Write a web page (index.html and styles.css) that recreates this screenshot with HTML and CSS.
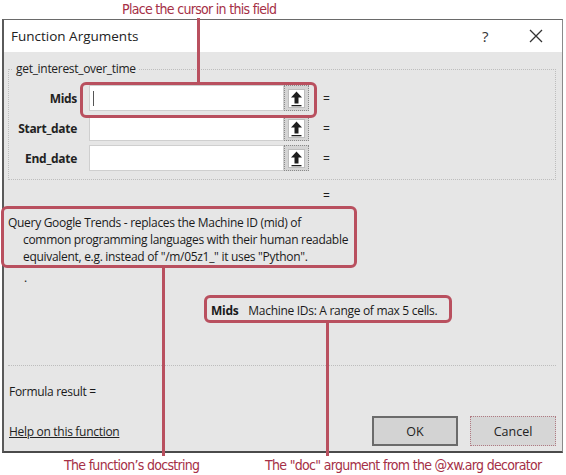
FILE: index.html
```html
<!DOCTYPE html>
<html>
<head>
<meta charset="utf-8">
<link rel="stylesheet" href="styles.css">
</head>
<body>
<div class="page">
  <div class="note note-top">Place the cursor in this field</div>

  <div class="dialog">
    <div class="titlebar">
      <span class="title">Function Arguments</span>
      <span class="tb-help">?</span>
      <span class="tb-close">
        <svg width="14" height="14" viewBox="0 0 14 14"><path d="M1 1 L13 13 M13 1 L1 13" stroke="#333" stroke-width="1.3" fill="none"/></svg>
      </span>
    </div>

    <div class="content">
      <fieldset class="group">
        <legend>get_interest_over_time</legend>
        <div class="args">
          <label class="arg-label">Mids</label>
          <div class="arg-input"><span class="caret"></span></div>
          <div class="ref-btn"><svg width="17" height="19" viewBox="0 0 17 19"><rect x="0.5" y="0.5" width="16" height="18" fill="#fff" stroke="#bdbdbd"/><path d="M8.5 2.5 L3 8.5 L6.5 8.5 L6.5 14.5 L10.5 14.5 L10.5 8.5 L14 8.5 Z" fill="#1e1e1e"/><rect x="3.5" y="16" width="10" height="1.3" fill="#1e1e1e"/></svg></div>
          <span class="eq">=</span>

          <label class="arg-label">Start_date</label>
          <div class="arg-input"></div>
          <div class="ref-btn"><svg width="17" height="19" viewBox="0 0 17 19"><rect x="0.5" y="0.5" width="16" height="18" fill="#fff" stroke="#bdbdbd"/><path d="M8.5 2.5 L3 8.5 L6.5 8.5 L6.5 14.5 L10.5 14.5 L10.5 8.5 L14 8.5 Z" fill="#1e1e1e"/><rect x="3.5" y="16" width="10" height="1.3" fill="#1e1e1e"/></svg></div>
          <span class="eq">=</span>

          <label class="arg-label">End_date</label>
          <div class="arg-input"></div>
          <div class="ref-btn"><svg width="17" height="19" viewBox="0 0 17 19"><rect x="0.5" y="0.5" width="16" height="18" fill="#fff" stroke="#bdbdbd"/><path d="M8.5 2.5 L3 8.5 L6.5 8.5 L6.5 14.5 L10.5 14.5 L10.5 8.5 L14 8.5 Z" fill="#1e1e1e"/><rect x="3.5" y="16" width="10" height="1.3" fill="#1e1e1e"/></svg></div>
          <span class="eq">=</span>
        </div>
      </fieldset>

      <div class="result-eq">=</div>

      <div class="doc">Query Google Trends - replaces the Machine ID (mid) of<br>common programming languages with their human readable<br>equivalent, e.g. instead of "/m/05z1_" it uses "Python".</div>
      <div class="dot">.</div>

      <div class="arg-doc"><b>Mids</b><span>Machine IDs: A range of max 5 cells.</span></div>

      <div class="sep"></div>

      <div class="formula">Formula result =</div>

      <div class="footer">
        <a class="help">Help on this function</a>
        <div class="buttons">
          <button class="btn btn-ok">OK</button>
          <button class="btn btn-cancel">Cancel</button>
        </div>
      </div>
    </div>
  </div>

  <div class="notes-bottom">
    <span class="note note-doc">The function’s docstring</span>
    <span class="note note-arg">The "doc" argument from the @xw.arg decorator</span>
  </div>

  <!-- annotation overlays -->
  <div class="hl hl-mids"></div>
  <div class="hl hl-doc"></div>
  <div class="hl hl-argdoc"></div>
  <div class="vline vl-top"></div>
  <div class="vline vl-doc"></div>
  <div class="vline vl-arg"></div>
</div>
</body>
</html>
```

FILE: styles.css
```css
* { box-sizing: border-box; }
html, body { margin: 0; padding: 0; background: #fff; }
body { font-family: "Open Sans", "Noto Sans", sans-serif; color: #1a1a1a; }

.page { position: relative; width: 566px; height: 475px; overflow: hidden; }

.note {
  font-family: "Liberation Sans Narrow", "DejaVu Sans Condensed", "Roboto", sans-serif;
  color: #a52f46;
  font-size: 14px;
  letter-spacing: -0.7px;
  white-space: nowrap;
}
.note-top { height: 19px; line-height: 18px; padding-left: 122px; }

.dialog {
  margin-left: 2px;
  width: 561px;
  height: 434px;
  border-top: 1px solid #6a6a6a;
  border-left: 2px solid #5a5a5a;
  border-right: 1px solid #8a8a8a;
  border-bottom: 2px solid #4a4a4a;
  display: flex;
  flex-direction: column;
}

.titlebar {
  height: 32px;
  background: #fff;
  display: flex;
  align-items: center;
  padding-left: 7px;
  flex: none;
}
.title { font-size: 13.5px; color: #222; flex: 1; }
.tb-help { font-size: 15px; width: 20px; margin-right: 27px; color: #333; }
.tb-close { width: 14px; height: 14px; margin-right: 19px; display: flex; }

.content {
  flex: 1;
  background: #e6e6e6;
  padding: 9px 6px 0 4px;
  display: flex;
  flex-direction: column;
  font-size: 12px;
  letter-spacing: -0.3px;
}

.group {
  margin: 0;
  padding: 8px 0 8px 0;
  border: 1px dotted #bdbdbd;
  min-width: 0;
}
.group legend {
  padding: 0 3px;
  margin-left: 4px;
  font-size: 12px;
  line-height: 16px;
  color: #222;
}

.args {
  display: grid;
  grid-template-columns: 68px 207px 25px auto;
  grid-auto-rows: 26px;
  row-gap: 4px;
  align-items: center;
}
.arg-label { font-weight: 700; text-align: right; color: #222; font-size: 12px; }
.arg-input {
  margin-left: 12px;
  height: 26px;
  background: #fff;
  border: 1px solid #cfcfcf;
  position: relative;
}
.caret { position: absolute; left: 3px; top: 5px; width: 1px; height: 15px; background: #555; }
.ref-btn {
  width: 25px;
  height: 26px;
  background: #d4d4d4;
  border: 1px dotted #8a8a8a;
  display: flex;
  align-items: center;
  justify-content: center;
}
.eq { padding-left: 14px; color: #222; }

.result-eq { margin-top: 8px; padding-left: 315px; line-height: 16px; }

.doc {
  margin-top: 10px;
  padding-left: 15px;
  text-indent: -15px;
  white-space: nowrap;
  line-height: 17px;
  color: #1a1a1a;
}
.dot { padding-left: 16px; line-height: 16px; margin-top: 5px; }

.arg-doc {
  margin-top: 17px;
  padding-left: 203px;
  line-height: 16px;
  display: flex;
  gap: 10px;
}
.arg-doc b { font-weight: 700; }

.sep { margin-top: 46px; border-top: 1px dotted #bdbdbd; }

.formula { margin-top: 18px; padding-left: 1px; line-height: 16px; }

.footer {
  margin-top: 16px;
  display: flex;
  align-items: center;
  padding-left: 1px;
}
.help { flex: 1; text-decoration: underline; color: #222; margin-top: 1px; }
.buttons { display: flex; gap: 12px; }
.btn {
  width: 86px;
  height: 30px;
  font-family: "Open Sans", "Noto Sans", sans-serif;
  font-size: 12.5px;
  color: #222;
  background: #d3d3d3;
  padding: 0;
}
.btn-ok { border: 2px solid #6b6b6b; }
.btn-cancel { border: 1px dotted #b07a82; background: #d6d6d6; }

.notes-bottom { position: relative; height: 20px; padding-top: 2px; line-height: 20px; display: flex; }
.note-doc { padding-left: 64px; width: 265px; }

/* overlays */
.hl {
  position: absolute;
  border: 3px solid #b9505f;
  border-radius: 6px;
}
.hl-mids { left: 80px; top: 82px; width: 237px; height: 36px; }
.hl-doc { left: 1px; top: 206px; width: 356px; height: 62px; }
.hl-argdoc { left: 204px; top: 295px; width: 248px; height: 28px; }

.vline { position: absolute; width: 3px; background: #b9505f; }
.vl-top { left: 197px; top: 18px; height: 65px; }
.vl-doc { left: 162px; top: 267px; height: 189px; }
.vl-arg { left: 326px; top: 322px; height: 134px; }
```
